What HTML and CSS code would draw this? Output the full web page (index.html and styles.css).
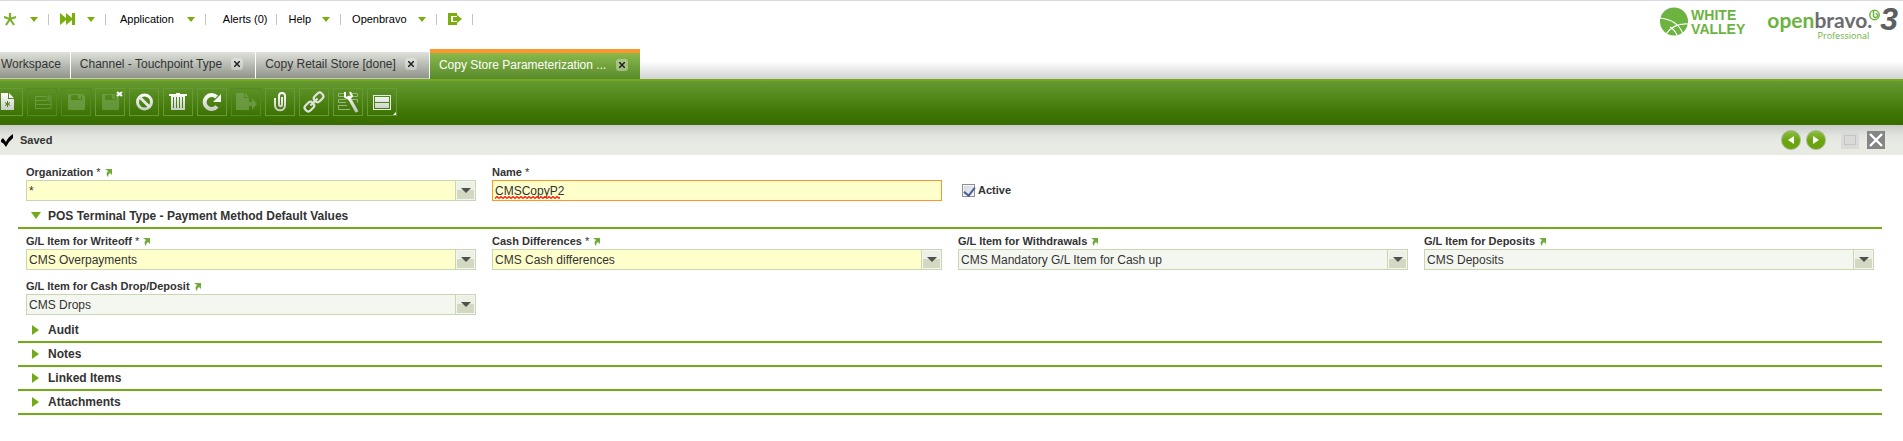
FILE: index.html
```
<!DOCTYPE html>
<html lang="en">
<head>
    <meta charset="utf-8">
    <title>Copy Store Parameterization</title>
    <link rel="stylesheet" href="styles.css">
</head>
<body>
    <svg class="defs" width="0" height="0">
        <defs>
            <linearGradient id="silver" gradientUnits="userSpaceOnUse" x1="0" y1="4" x2="0" y2="24">
                <stop offset="0" stop-color="#ffffff"/>
                <stop offset="1" stop-color="#bdc4b8"/>
            </linearGradient>
            <symbol id="zoom-arrow" viewBox="0 0 7 9">
                <path d="M0 1h7v6L5 5Q3 6 3 9Q0 6 3 3z" fill="#6fab3a"/>
            </symbol>
        </defs>
    </svg>

    <header class="header">
        <nav class="nav">
            <button class="nav-item first" aria-label="Create new">
                <svg width="14" height="14" viewBox="0 0 14 14"><path d="M7 7V1M7 7L1 5M7 7l6-2M7 7l-4 6M7 7l4 6" stroke="#7bb02c" stroke-width="2.2"/></svg>
                <span class="arrow"></span>
            </button>
            <button class="nav-item launch" aria-label="Quick launch">
                <svg width="15" height="12" viewBox="0 0 15 12"><path d="M0 0l6 5V0l6 5V0h3v12h-3V7l-6 5V7l-6 5z" fill="#7aae0c"/></svg>
                <span class="arrow"></span>
            </button>
            <button class="nav-item wide">Application <span class="arrow"></span></button>
            <button class="nav-item alerts">Alerts (0)</button>
            <button class="nav-item">Help <span class="arrow"></span></button>
            <button class="nav-item">Openbravo <span class="arrow"></span></button>
            <button class="nav-item" aria-label="Log out">
                <svg width="14" height="12" viewBox="0 0 14 12"><path d="M0 0h9v3H3v6h6v3H0zM5 4h4V2l5 4-5 4V8H5z" fill="#7aae0c"/></svg>
            </button>
        </nav>
        <div class="logos">
            <div class="client-logo">
                <svg width="28" height="29" viewBox="0 0 28 29">
                    <circle cx="14" cy="14.500" r="14" fill="#6cb33f"/>
                    <path d="M0 11Q18 13 23 27M28 17Q14 16 6 27M10 20Q14 22 17 28" fill="none" stroke="#fff" stroke-width="1.200"/>
                </svg>
                <div class="client-name">WHITE<br>VALLEY</div>
            </div>
            <div class="product-logo">
                <div class="product-name">
                    <div class="brand"><span>open</span>bravo.</div>
                    <div class="edition">Professional</div>
                </div>
                <svg width="11" height="16" viewBox="0 0 11 16"><circle cx="5.500" cy="8" r="4.700" fill="#fff" stroke="#6cb33f" stroke-width="1.500"/><path d="M4.500 4v5.500M4.500 9a2 2 0 1 0 2-2.500" fill="none" stroke="#6cb33f" stroke-width="1.500"/></svg>
                <div class="version">3</div>
            </div>
        </div>
    </header>

    <div class="tabs">
        <div class="tab first"><a href="#">Workspace</a></div>
        <div class="tab"><a href="#">Channel - Touchpoint Type</a><button class="tab-close" aria-label="Close tab"><svg width="6" height="6" viewBox="0 0 6 6"><path d="M0 0l6 6M6 0l-6 6"/></svg></button></div>
        <div class="tab"><a href="#">Copy Retail Store [done]</a><button class="tab-close" aria-label="Close tab"><svg width="6" height="6" viewBox="0 0 6 6"><path d="M0 0l6 6M6 0l-6 6"/></svg></button></div>
        <div class="tab active"><a href="#">Copy Store Parameterization ...</a><button class="tab-close" aria-label="Close tab"><svg width="6" height="6" viewBox="0 0 6 6"><path d="M0 0l6 6M6 0l-6 6"/></svg></button></div>
    </div>

    <div class="toolbar">
        <button class="tool" aria-label="New"><svg viewBox="0 0 28 26"><path d="M7 4h7v6h6v11h-13zM15 4l5 5h-5z" fill="url(#silver)"/><path d="M13.500 12v6M11 13.500l5 3M16 13.500l-5 3" stroke="#4c8018"/></svg></button>
        <button class="tool off" aria-label="New in grid" disabled><svg viewBox="0 0 28 26"><path d="M18 7.500H7.500v12h15.500V12M7.500 11.500H18M7.500 15.500H23" fill="none" stroke="#7aa657" /><path d="M21 6v7M18 7.500l6 4M24 7.500l-6 4" stroke="#7aa657"/></svg></button>
        <button class="tool off" aria-label="Save" disabled><svg viewBox="0 0 28 26"><path fill-rule="evenodd" d="M6 6l1-1h14l2 2v13l-1 1H7l-1-1zM9 6v5h11V6zM16 6h3v4h-3z" fill="#7aa657"/></svg></button>
        <button class="tool" aria-label="Save and close"><svg viewBox="0 0 28 26"><path opacity=".6" fill-rule="evenodd" d="M6 6l1-1h14l2 2v13l-1 1H7l-1-1zM9 6v5h11V6zM16 6h3v4h-3z" fill="#7aa657"/><path d="M21 3l5 4M26 3l-5 4" stroke="#fff" stroke-width="2.200"/></svg></button>
        <button class="tool" aria-label="Undo"><svg viewBox="0 0 28 26"><circle cx="14.500" cy="13" r="7" fill="none" stroke="url(#silver)" stroke-width="3"/><path d="M9.500 8l10 10" stroke="#e4e8e1" stroke-width="3"/></svg></button>
        <button class="tool" aria-label="Delete"><svg viewBox="0 0 28 26"><path fill-rule="evenodd" d="M5 5h7V4h4v1h7v2h-2v14H7V7H5zM9 8v11h1V8zM12 8v11h1V8zM15 8v11h1V8zM18 8v11h1V8z" fill="url(#silver)"/></svg></button>
        <button class="tool" aria-label="Refresh"><svg viewBox="0 0 28 26"><path d="M19 17.500A7 7 0 1 1 18.500 8" fill="none" stroke="url(#silver)" stroke-width="4"/><path d="M23 5v8h-8z" fill="#f4f6f3"/></svg></button>
        <button class="tool off" aria-label="Export" disabled><svg viewBox="0 0 28 26"><path d="M4 4h8v5h5v4h3v-4l5 6-5 6v-4h-3v4H4zM13 4l4 4h-4z" fill="#7aa657"/></svg></button>
        <button class="tool" aria-label="Attachments"><svg viewBox="0 0 28 26"><path d="M9 9v7c0 7 10 7 10 0V7c0-4-6-4-6 0v8c0 3 3 3 3 0V8" fill="none" stroke="url(#silver)" stroke-width="2"/></svg></button>
        <button class="tool" aria-label="Link"><svg viewBox="0 0 28 26"><g transform="rotate(-45 14 13)" fill="none" stroke="#dfe3dc" stroke-width="2.200"><rect x="2.500" y="9.500" width="10" height="7" rx="3"/><rect x="15.500" y="9.500" width="10" height="7" rx="3"/><path d="M9 13h10"/></g></svg></button>
        <button class="tool" aria-label="Customize form"><svg viewBox="0 0 28 26"><path d="M10 4.500H4.500v3H10M18 4.500h5.500v3H18M12 10.500H4.500v3H12M18 10.500h5.500v3M13 16.500H4.500v4H16" fill="none" stroke="#98b781"/><path d="M14 7l9 16" stroke="url(#silver)" stroke-width="3.200"/><path d="M11 3v5l4 2 3-3-2-4" fill="none" stroke="#fff" stroke-width="2"/></svg></button>
        <button class="tool" aria-label="Status view"><svg viewBox="0 0 28 26"><path fill-rule="evenodd" d="M5 6h18v15H5zM6 7v13h16V7z" fill="#e8ebe6"/><path d="M7 8h14v5H7zM7 14h14v5H7z" fill="url(#silver)"/><path d="M28 23v3h-3z" fill="#fff"/></svg></button>
    </div>

    <div class="statusbar">
        <svg width="12" height="13" viewBox="0 0 12 13"><path d="M0 6l2-2 3 4Q7 3 12 0V4Q8 7 5 13Q3 9 0 8z" fill="#000"/></svg>
        <span class="status-text">Saved</span>
        <button class="round" aria-label="Previous record"><svg width="6" height="8" viewBox="0 0 6 8"><path d="M6 0v8L0 4z" fill="#fff"/></svg></button>
        <button class="round" aria-label="Next record"><svg width="6" height="8" viewBox="0 0 6 8"><path d="M0 0v8l6-4z" fill="#fff"/></svg></button>
        <button class="square maximize" aria-label="Maximize"><svg width="12" height="10" viewBox="0 0 12 10"><rect x=".5" y=".5" width="11" height="9" fill="none" stroke="#c4c5c2"/></svg></button>
        <button class="square close" aria-label="Close form"><svg width="14" height="14" viewBox="0 0 14 14"><path d="M1 1l12 12M13 1L1 13" stroke="#fff" stroke-width="2.400"/></svg></button>
    </div>

    <main class="form">
        <div class="fields">
            <div class="field">
                <label for="organization">Organization <span class="star">*</span> <svg class="zoom" width="7" height="9"><use href="#zoom-arrow"/></svg></label>
                <div class="combo required"><input type="text" id="organization" value="*"><button class="picker" aria-label="Open list"></button></div>
            </div>
            <div class="field">
                <label for="name">Name <span class="star">*</span></label>
                <div class="combo required focused"><span class="typed"><input type="text" id="name" value="CMSCopyP2" spellcheck="false"><svg class="squiggle" width="65" height="3" aria-hidden="true"><defs><pattern id="wave" width="4" height="3" patternUnits="userSpaceOnUse"><path d="M0 2.500L2 .5L4 2.500" fill="none" stroke="#ff1a10" stroke-width="1.300"/></pattern></defs><rect width="65" height="3" fill="url(#wave)"/></svg></span></div>
            </div>
            <div class="field check">
                <input type="checkbox" id="active" checked>
                <label for="active">Active</label>
            </div>
        </div>

        <button class="section open">POS Terminal Type - Payment Method Default Values</button>
        <div class="fields">
            <div class="field">
                <label for="writeoff">G/L Item for Writeoff <span class="star">*</span> <svg class="zoom" width="7" height="9"><use href="#zoom-arrow"/></svg></label>
                <div class="combo required"><input type="text" id="writeoff" value="CMS Overpayments"><button class="picker" aria-label="Open list"></button></div>
            </div>
            <div class="field">
                <label for="differences">Cash Differences <span class="star">*</span> <svg class="zoom" width="7" height="9"><use href="#zoom-arrow"/></svg></label>
                <div class="combo required"><input type="text" id="differences" value="CMS Cash differences"><button class="picker" aria-label="Open list"></button></div>
            </div>
            <div class="field">
                <label for="withdrawals">G/L Item for Withdrawals <svg class="zoom" width="7" height="9"><use href="#zoom-arrow"/></svg></label>
                <div class="combo"><input type="text" id="withdrawals" value="CMS Mandatory G/L Item for Cash up"><button class="picker" aria-label="Open list"></button></div>
            </div>
            <div class="field">
                <label for="deposits">G/L Item for Deposits <svg class="zoom" width="7" height="9"><use href="#zoom-arrow"/></svg></label>
                <div class="combo"><input type="text" id="deposits" value="CMS Deposits"><button class="picker" aria-label="Open list"></button></div>
            </div>
            <div class="field">
                <label for="drops">G/L Item for Cash Drop/Deposit <svg class="zoom" width="7" height="9"><use href="#zoom-arrow"/></svg></label>
                <div class="combo"><input type="text" id="drops" value="CMS Drops"><button class="picker" aria-label="Open list"></button></div>
            </div>
        </div>

        <button class="section">Audit</button>
        <button class="section">Notes</button>
        <button class="section">Linked Items</button>
        <button class="section">Attachments</button>
    </main>
</body>
</html>
```

FILE: styles.css
```
* { box-sizing: border-box; }
body {
    margin: 0;
    background: #fff;
    color: #333;
    font-family: "Liberation Sans", Arial, sans-serif;
    font-size: 12px;
    overflow-x: hidden;
}
button, input { font: inherit; color: inherit; }
button { margin: 0; padding: 0; border: none; background: none; cursor: pointer; }
svg { display: block; flex: none; }
.defs { position: absolute; }

/* Header */
.header {
    display: flex;
    justify-content: space-between;
    height: 49px;
    border-top: 1px solid #d9dade;
}
.nav {
    display: flex;
    align-items: center;
    height: 36px;
    color: #000;
    font-size: 11px;
}
.nav-item {
    display: flex;
    align-items: center;
    height: 11px;
    padding: 0 10px 0 11px;
    border-right: 1px solid #c3c3c3;
    gap: 11px;
}
.nav-item.first { padding-left: 3px; gap: 13px; }
.nav-item.launch { gap: 12px; }
.nav-item.wide { padding-left: 14px; gap: 13px; }
.nav-item.alerts { padding: 0 9px 0 17px; }
.arrow {
    border: 4px solid transparent;
    border-top: 5px solid #7aae0c;
    border-bottom: none;
}
.logos { display: flex; padding: 6px 5px 0 0; gap: 22px; }
.client-logo { display: flex; gap: 3px; }
.client-name {
    color: #6cb33f;
    font-size: 14px;
    font-weight: bold;
    line-height: 14px;
    padding-top: 1px;
}
.product-logo { display: flex; }
.product-name { text-align: right; font-family: Lato, sans-serif; }
.brand {
    color: #6b6c6e;
    font-size: 21px;
    font-weight: bold;
    line-height: 24px;
    padding-top: 1px;
}
.brand span { color: #6cb33f; }
.edition {
    padding-right: 3px;
    color: #6cb33f;
    font-family: "Open Sans", sans-serif;
    font-size: 9px;
    line-height: 8px;
}
.product-logo svg { margin-left: -3px; }
.version {
    color: #5d5e60;
    font-size: 32px;
    font-style: italic;
    font-weight: bold;
    line-height: 24px;
}

/* Tabs */
.tabs {
    display: flex;
    align-items: flex-end;
    height: 30px;
    background: linear-gradient(#fff 40%, #d2d2d2);
}
.tab {
    display: flex;
    align-items: center;
    height: 27px;
    padding: 0 12px 2px 9px;
    gap: 9px;
    border-right: 1px solid #fff;
    border-bottom: 1px solid #c6c6c6;
    background: linear-gradient(#dfe2da, #8f938a);
}
.tab.first { padding: 0 9px 2px 1px; }
.tab a { color: #333; text-decoration: none; }
.tab.active {
    height: 30px;
    padding-right: 12px;
    gap: 10px;
    border-top: 4px solid #ff962d;
    border-right: none;
    border-bottom: none;
    background: linear-gradient(#8ab94c, #588a2b);
}
.tab.active a { color: #fff; }
.tab-close {
    display: flex;
    align-items: center;
    justify-content: center;
    width: 12px;
    height: 12px;
    border-radius: 3px;
    background: rgba(255, 255, 255, .35);
}
.tab-close path { stroke: #222; stroke-width: 1.5; }

/* Toolbar */
.toolbar {
    display: flex;
    height: 46px;
    padding-top: 7px;
    gap: 4px;
    border-top: 2px solid #76ab1e;
    background: linear-gradient(#659a30, #3e7404 75%, #376a00);
}
.tool {
    flex: none;
    width: 30px;
    height: 28px;
    border: 1px solid #679a37;
}
.tool:first-child { margin-left: -7px; }
.tool.off { border-color: #548a25; }
.tool.off svg { opacity: .65; }
.tool svg { width: 28px; height: 26px; }

/* Status bar */
.statusbar {
    display: flex;
    align-items: center;
    height: 30px;
    padding: 0 18px 0 1px;
    background: linear-gradient(#c9cbc7, #e2e4df 35%, #e8ebe4 60%);
}
.status-text { margin: 0 auto 0 7px; font-size: 11px; font-weight: bold; }
.round {
    display: flex;
    align-items: center;
    justify-content: center;
    width: 20px;
    height: 20px;
    margin-right: 5px;
    border: 1px solid #a4b894;
    border-radius: 50%;
    background: linear-gradient(#8ebc3f, #69a40c 55%);
}
.square {
    display: flex;
    align-items: center;
    justify-content: center;
    width: 18px;
    height: 18px;
}
.maximize { margin: 0 8px 0 10px; background: #dadbd8; }
.close { background: #858585; }

/* Form */
.form { padding: 10px 21px 20px 18px; }
.fields {
    display: grid;
    grid-template-columns: repeat(4, 1fr);
    gap: 9px 16px;
    padding: 0 8px;
}
.field label {
    display: flex;
    align-items: center;
    height: 14px;
    margin-bottom: 1px;
    font-size: 11px;
    font-weight: bold;
    gap: 3px;
}
.star { font-weight: normal; }
.zoom { margin-left: 1px; }
.combo {
    display: flex;
    height: 21px;
    border: 1px solid #c9d6b4;
    background: #f4f7f0;
}
.combo.required { background: #ffffcc; }
.combo.focused { border-color: #ff962d; }
.combo input {
    flex: 1;
    min-width: 0;
    padding: 1px 2px 0;
    border: none;
    outline: none;
    background: none;
}
.typed { display: flex; flex: 1; position: relative; }
.squiggle { position: absolute; left: 2px; bottom: 1px; }
.picker {
    display: flex;
    align-items: center;
    justify-content: center;
    width: 19px;
    border: 1px solid #f4f7f0;
    box-shadow: -1px 0 #c9d6b4;
    background: linear-gradient(#edf0e6 45%, #d3d8c2 50%);
}
.picker::before {
    content: "";
    border: 5px solid transparent;
    border-top: 5px solid #4f514a;
    border-bottom: none;
}
.check { display: flex; align-items: center; padding: 14px 0 0 4px; gap: 3px; }
.check input {
    appearance: none;
    width: 13px;
    height: 13px;
    margin: 0;
    border: 1px solid #8e8f8f;
    background: linear-gradient(135deg, #cfd4dc, #f5f6f8);
    box-shadow: inset 0 0 0 1px #f4f4f4;
}
.check input:checked::before {
    content: "";
    display: block;
    width: 5px;
    height: 9px;
    margin: 0 0 0 3px;
    border: solid #4b5f9e;
    border-width: 0 2px 2px 0;
    transform: rotate(38deg);
}
.section {
    display: flex;
    align-items: center;
    width: 100%;
    height: 24px;
    padding-left: 14px;
    gap: 9px;
    border-bottom: 2px solid #73ab18;
    font-weight: bold;
}
.section::before {
    content: "";
    border: 5px solid transparent;
    border-left: 7px solid #73ab18;
    border-right: none;
}
.section.open {
    height: 25px;
    margin: 3px 0 5px;
    padding-left: 13px;
    gap: 7px;
}
.section.open::before {
    border: 5px solid transparent;
    border-top: 7px solid #73ab18;
    border-bottom: none;
}
.fields + .section:not(.open) { margin-top: 4px; }
```
